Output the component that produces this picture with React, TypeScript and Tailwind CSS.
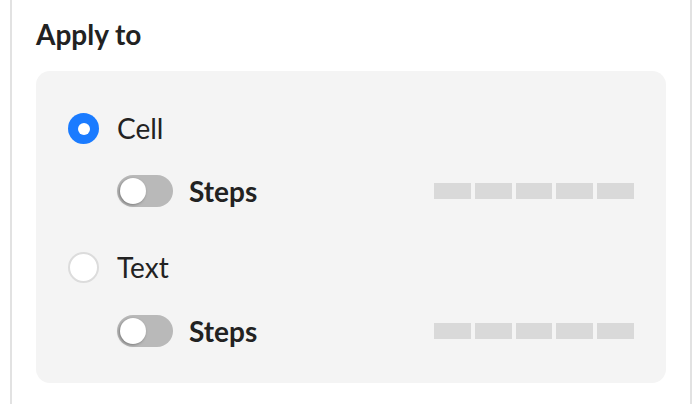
import React, { useState } from 'react';

const Toggle = () => (
  <div className="relative w-[56px] h-[32px] rounded-full bg-[#b9b9b9] shrink-0">
    <div className="absolute left-[3px] top-[3px] w-[26px] h-[26px] rounded-full bg-white shadow-[-1px_1px_3px_rgba(0,0,0,0.35)]" />
  </div>
);

const Skeleton = () => (
  <div className="ml-auto flex gap-[4px]">
    {[37, 37, 36, 37, 37].map((w, i) => (
      <div key={i} className="h-[16px] bg-[#d9d9d9]" style={{ width: w }} />
    ))}
  </div>
);

const Radio = ({ checked }: { checked: boolean }) =>
  checked ? (
    <div className="w-[31px] h-[31px] rounded-full bg-[#1a7bff] flex items-center justify-center shrink-0">
      <div className="w-[12px] h-[12px] rounded-full bg-white" />
    </div>
  ) : (
    <div className="w-[31px] h-[31px] rounded-full bg-white border-2 border-[#dcdcdc] shrink-0" />
  );

const App = () => {
  const [target, setTarget] = useState('cell');

  return (
    <div className="w-[698px] h-[404px] bg-white font-['Lato','Liberation_Sans',sans-serif] text-[#222]">
      <div className="ml-[10px] mr-[6px] h-full border-x-2 border-[#e2e2e2] px-6 pt-[17px]">
        <h2 className="text-[28px] font-bold leading-[34px]">Apply to</h2>
        <div className="mt-[20px] rounded-[14px] bg-[#f4f4f4] px-8 pt-[42px] pb-[36px]">
          <button className="flex items-center gap-[18px]" onClick={() => setTarget('cell')}>
            <Radio checked={target === 'cell'} />
            <span className="text-[28px] leading-[31px]">Cell</span>
          </button>
          <div className="mt-[31px] ml-[49px] flex items-center gap-[16px]">
            <Toggle />
            <span className="text-[28px] font-bold leading-[32px]">Steps</span>
            <Skeleton />
          </div>
          <button className="mt-[45px] flex items-center gap-[18px]" onClick={() => setTarget('text')}>
            <Radio checked={target === 'text'} />
            <span className="text-[28px] leading-[31px]">Text</span>
          </button>
          <div className="mt-[32px] ml-[49px] flex items-center gap-[16px]">
            <Toggle />
            <span className="text-[28px] font-bold leading-[32px]">Steps</span>
            <Skeleton />
          </div>
        </div>
      </div>
    </div>
  );
};

export default App;
